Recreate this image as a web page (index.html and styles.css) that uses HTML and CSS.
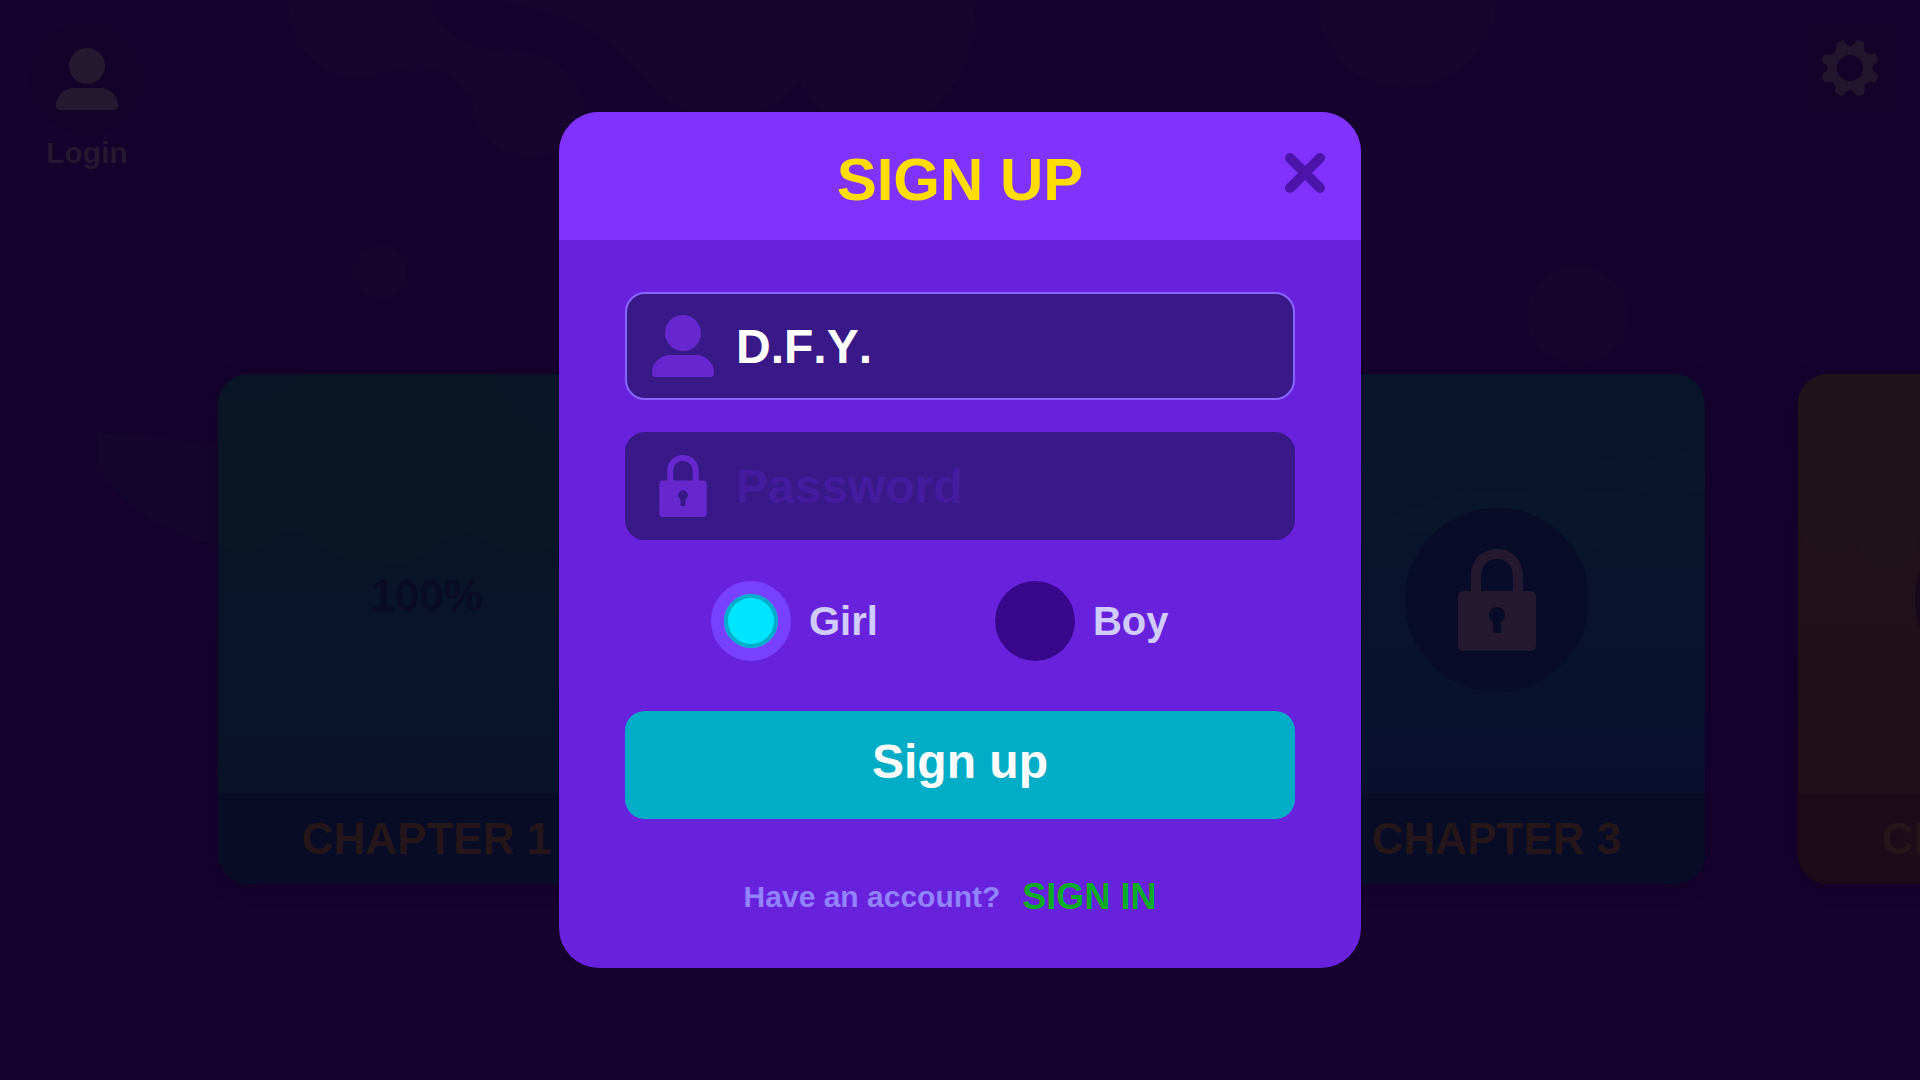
FILE: index.html
```html
<!DOCTYPE html>
<html lang="en">
<head>
<meta charset="utf-8">
<meta name="viewport" content="width=device-width, initial-scale=1">
<title>Sign up</title>
<link rel="stylesheet" href="styles.css">
</head>
<body>
<svg class="symbols" aria-hidden="true">
  <symbol id="user" viewBox="0 0 62 62">
    <circle cx="31" cy="18" r="18"/>
    <path d="M18 40H44C54 40 62 48 62 57V58Q62 62 58 62H4Q0 62 0 58V57C0 48 8 40 18 40Z"/>
  </symbol>
  <symbol id="lock" viewBox="0 0 78 102">
    <path fill-rule="evenodd" d="M13 42V27C13 11 24 0 39 0S65 11 65 27V42H72Q78 42 78 48V96Q78 102 72 102H6Q0 102 0 96V48Q0 42 6 42ZM23 42H55V27C55 17 49 10 39 10S23 17 23 27ZM35 84H43V73A8 8 0 1 0 35 73Z"/>
  </symbol>
</svg>

<svg class="scenery" viewBox="0 0 1920 1080" preserveAspectRatio="xMidYMin slice" aria-hidden="true">
  <rect class="haze" width="1920" height="17"/>
  <g class="cloud">
    <path d="M288 0H432C436 30 470 51 510 52C550 48 582 75 582 115C580 143 555 157 529 157C497 157 476 136 473 106C467 78 430 61 395 71C340 93 291 65 288 0Z"/>
    <path d="M500 0H976C974 62 950 127 872 127C832 127 812 110 800 82C760 130 690 125 655 92C630 60 600 22 500 0Z"/>
    <path d="M1310 0H1496C1496 50 1455 87 1405 87C1350 87 1315 50 1310 0Z"/>
    <circle cx="381" cy="272" r="27"/>
    <circle cx="1577" cy="315" r="50"/>
  </g>
  <g class="mist">
    <path d="M1135 0H1320V20C1330 60 1355 85 1390 92C1290 115 1190 90 1135 0Z"/>
    <path d="M1580 0H1720C1700 56 1610 56 1580 0Z"/>
    <circle cx="1898" cy="170" r="29"/>
    <path d="M0 431C80 429 150 438 218 444V640C140 630 60 610 0 596Z"/>
    <path d="M1722 505L1797 448V510L1722 528ZM1724 612L1780 590V653H1724Z"/>
    <circle cx="120" cy="874" r="15"/>
    <circle cx="670" cy="985" r="15"/>
    <circle cx="1243" cy="970" r="14"/>
  </g>
  <path class="beam" d="M97 432C140 434 180 440 218 444V546C160 535 115 500 97 465Z"/>
</svg>

<div class="page">
  <header class="topbar">
    <a class="login" href="#login">
      <span class="login-badge"><svg class="icon-user"><use href="#user"/></svg></span>
      Login
    </a>
    <button class="settings" type="button" aria-label="Settings">
      <svg class="icon-gear" viewBox="-28 -28 56 56" aria-hidden="true">
        <path fill-rule="evenodd" d="M-6 -28L-9 -27Q-14 -26 -14 -22C-13 -15 -17 -13 -23 -14Q-26 -14 -27 -11L-28 -8Q-28 -6 -26 -5C-21 -2 -21 2 -26 5Q-28 6 -28 9L-27 12Q-26 15 -22 14C-17 13 -13 17 -15 22Q-15 25 -12 26L-9 28Q-7 28 -5 26C-2 21 2 21 5 26Q7 28 9 28L12 27Q15 26 15 22C13 17 17 13 22 14Q26 15 27 12L28 9Q28 6 26 5C21 2 21 -2 26 -5Q28 -6 28 -8L27 -11Q26 -15 23 -14C17 -13 13 -17 14 -22Q15 -26 12 -27L9 -28Q7 -28 5 -26C2 -21 -2 -21 -5 -25Q-5 -27 -6 -28ZM0 -13A13 13 0 1 1 0 13A13 13 0 1 1 0 -13Z"/>
      </svg>
    </button>
  </header>

  <main class="chapters">
    <article class="card card-teal">
      <svg class="card-art" viewBox="0 0 417 510" aria-hidden="true">
        <path d="M85 0H280C280 40 330 60 380 80C380 140 350 180 310 180C290 180 270 170 255 160C215 160 210 190 175 191C160 191 150 180 145 188C120 190 100 170 85 160C50 150 60 180 20 180C8 178 0 170 0 160V20Q40 40 85 0Z"/>
      </svg>
      <div class="card-body">100%</div>
      <h2 class="card-title">CHAPTER 1</h2>
    </article>
    <article class="card card-active"></article>
    <article class="card card-blue">
      <svg class="card-art" viewBox="0 0 417 510" aria-hidden="true">
        <path d="M70 100H340C350 130 390 125 417 118V96A30 30 0 0 0 385 75C360 95 330 88 310 84C310 70 320 60 315 50H280L240 90H70ZM80 150L180 115L260 120L340 118C350 150 310 190 260 180Z"/>
      </svg>
      <div class="card-body"><span class="card-lock"><svg class="icon-lock"><use href="#lock"/></svg></span></div>
      <h2 class="card-title">CHAPTER 3</h2>
    </article>
    <article class="card card-red">
      <svg class="card-art" viewBox="0 0 417 510" aria-hidden="true">
        <path d="M0 0H417V160H120A30 30 0 0 1 58 170C40 190 10 180 0 155Z"/>
      </svg>
      <div class="card-body"><span class="card-lock"><svg class="icon-lock"><use href="#lock"/></svg></span></div>
      <h2 class="card-title">CHAPTER 4</h2>
    </article>
  </main>
</div>

<div class="overlay">
  <section class="dialog" role="dialog" aria-modal="true" aria-labelledby="dialog-title">
    <header class="dialog-header">
      <h1 class="dialog-title" id="dialog-title">SIGN UP</h1>
      <button class="close" type="button" aria-label="Close">
        <svg class="icon-close" viewBox="0 0 40 40" aria-hidden="true"><path d="M5 5L35 35M35 5L5 35"/></svg>
      </button>
    </header>
    <form class="form">
      <div class="field field-focused">
        <label class="field-icon" for="name" aria-label="User name"><svg class="icon-user"><use href="#user"/></svg></label>
        <input class="field-input" id="name" type="text" value="D.F.Y.">
      </div>
      <div class="field">
        <label class="field-icon" for="password" aria-label="Password"><svg class="icon-lock-small"><use href="#lock"/></svg></label>
        <input class="field-input" id="password" type="password" placeholder="Password">
      </div>
      <div class="choices">
        <label class="choice"><input class="radio" type="radio" name="gender" checked>Girl</label>
        <label class="choice"><input class="radio" type="radio" name="gender">Boy</label>
      </div>
      <button class="submit" type="submit">Sign up</button>
      <p class="account">Have an account? <a class="signin" href="#signin">SIGN IN</a></p>
    </form>
  </section>
</div>
</body>
</html>
```

FILE: styles.css
```css
* {
  box-sizing: border-box;
}

body {
  margin: 0;
  background: #15022d;
  font-family: "Arial Rounded MT Bold", "Liberation Sans", Arial, sans-serif;
  font-weight: 700;
  font-kerning: none;
  line-height: 1;
}

h1,
h2,
p {
  margin: 0;
}

button,
input {
  border: 0;
  font: inherit;
  font-kerning: none;
}

a {
  text-decoration: none;
}

.symbols {
  position: absolute;
  width: 0;
  height: 0;
}

/* Background scenery */

.scenery {
  position: fixed;
  inset: 0;
  width: 100%;
  height: 100%;
}

.haze {
  fill: #16022e;
}

.cloud {
  fill: #18052d;
}

.mist {
  fill: #16032d;
}

.beam {
  fill: #14062d;
}

/* Page */

.page {
  position: relative;
  display: flex;
  flex-direction: column;
  min-height: 100vh;
  overflow: hidden;
}

.topbar {
  display: flex;
  justify-content: space-between;
  align-items: flex-start;
  padding: 23px 26px 7px 31px;
}

.login {
  display: flex;
  flex-direction: column;
  align-items: center;
  color: #241930;
  font-size: 30px;
  line-height: 36px;
}

.login-badge {
  display: grid;
  place-items: center;
  width: 112px;
  height: 112px;
  border-radius: 50%;
  background: #130229;
}

.icon-user {
  display: block;
  width: 62px;
  height: 62px;
  fill: currentColor;
}

.settings {
  display: grid;
  place-items: center;
  width: 88px;
  height: 90px;
  padding: 0;
  border-radius: 12px;
  background: #140229;
  color: #21162d;
}

.icon-gear {
  width: 56px;
  height: 56px;
  fill: currentColor;
}

.chapters {
  display: flex;
  flex: 1;
  align-items: center;
  gap: 93px;
  padding-left: max(24px, calc(50vw - 742px));
}

.card {
  position: relative;
  display: flex;
  flex: 0 0 417px;
  flex-direction: column;
  height: 510px;
  overflow: hidden;
  border-radius: 30px;
  box-shadow: 0 4px 16px #130229;
}

.card-active {
  flex-basis: 467px;
  height: 570px;
  background: #09122a;
}

.card-teal {
  background: linear-gradient(#091527, #09132a 60%, #081027);
}

.card-blue {
  background: linear-gradient(#09142b, #09122d 60%, #070e2d);
}

.card-red {
  background: linear-gradient(#21131a, #20101a 60%, #200c18);
}

.card-art {
  position: absolute;
  inset: 0;
  width: 100%;
  height: 100%;
}

.card-teal .card-art {
  fill: #0a1525;
}

.card-blue .card-art {
  fill: #09152b;
}

.card-red .card-art {
  fill: #21131a;
}

.card-body {
  position: relative;
  display: grid;
  flex: 1;
  place-items: center;
  padding-top: 32px;
  color: #0a0c25;
  font-size: 44px;
}

.card-teal .card-body {
  padding-top: 24px;
}

.card-lock {
  display: grid;
  place-items: center;
  width: 184px;
  height: 184px;
  border-radius: 50%;
  background: #080c28;
  color: #241930;
}

.card-red .card-lock {
  background: #180a1c;
}

.icon-lock {
  width: 78px;
  height: 102px;
  fill: currentColor;
}

.card-title {
  position: relative;
  background: #080c27;
  color: #241619;
  font-size: 44px;
  line-height: 91px;
  text-align: center;
}

.card-red .card-title {
  background: #1d0b1a;
}

/* Sign-up dialog */

.overlay {
  position: fixed;
  inset: 0;
  display: grid;
  place-items: center;
  overflow: auto;
}

.dialog {
  width: min(802px, 100%);
  overflow: hidden;
  border-radius: 40px;
  background: #6822db;
}

.dialog-header {
  display: grid;
  grid-template-columns: 1fr auto 1fr;
  align-items: center;
  padding: 0 36px 6px;
  background: #8033ff;
}

.dialog-title {
  grid-column: 2;
  padding-top: 14px;
  color: #ffdd00;
  font-size: 60px;
  line-height: 108px;
}

.close {
  justify-self: end;
  padding: 0;
  background: none;
  color: #4c14a8;
}

.icon-close {
  display: block;
  width: 40px;
  height: 40px;
  fill: none;
  stroke: currentColor;
  stroke-width: 10px;
  stroke-linecap: round;
}

.form {
  display: flex;
  flex-direction: column;
  padding: 52px 66px;
}

.field {
  display: flex;
  align-items: center;
  gap: 22px;
  height: 108px;
  margin-bottom: 32px;
  padding: 0 25px;
  border: 2px solid #391888;
  border-radius: 20px;
  background: #391888;
}

.field-focused {
  border-color: #8866ff;
}

.field-icon {
  display: grid;
  flex: 0 0 62px;
  place-items: center;
  color: #6727ce;
}

.icon-lock-small {
  width: 48px;
  height: 62px;
  fill: currentColor;
}

.field-input {
  flex: 1;
  min-width: 0;
  padding: 2px 0 0;
  outline: 0;
  background: none;
  color: #fff;
  font-size: 48px;
  line-height: 56px;
}

.field-input::placeholder {
  color: #451ba0;
  opacity: 1;
}

.choices {
  display: flex;
  flex-wrap: wrap;
  gap: 24px 117px;
  margin: 9px 0 50px;
  padding-left: 86px;
}

.choice {
  display: flex;
  align-items: center;
  gap: 18px;
  color: #d0ccff;
  font-size: 40px;
}

.radio {
  width: 80px;
  height: 80px;
  margin: 0;
  border-radius: 50%;
  appearance: none;
  background: #39078c;
}

.radio:checked {
  border: 13px solid #7840ff;
  background: #00e5ff;
  box-shadow: inset 0 0 0 4px #00aeca;
}

.submit {
  height: 108px;
  padding: 0 0 6px;
  border-radius: 20px;
  background: #00acc6;
  color: #fff;
  font-size: 48px;
}

.account {
  display: flex;
  justify-content: center;
  align-items: center;
  gap: 22px;
  padding: 58px 20px 0 0;
  color: #9283ff;
  font-size: 30px;
  line-height: 39px;
}

.signin {
  color: #09ad23;
  font-size: 36px;
}
```
